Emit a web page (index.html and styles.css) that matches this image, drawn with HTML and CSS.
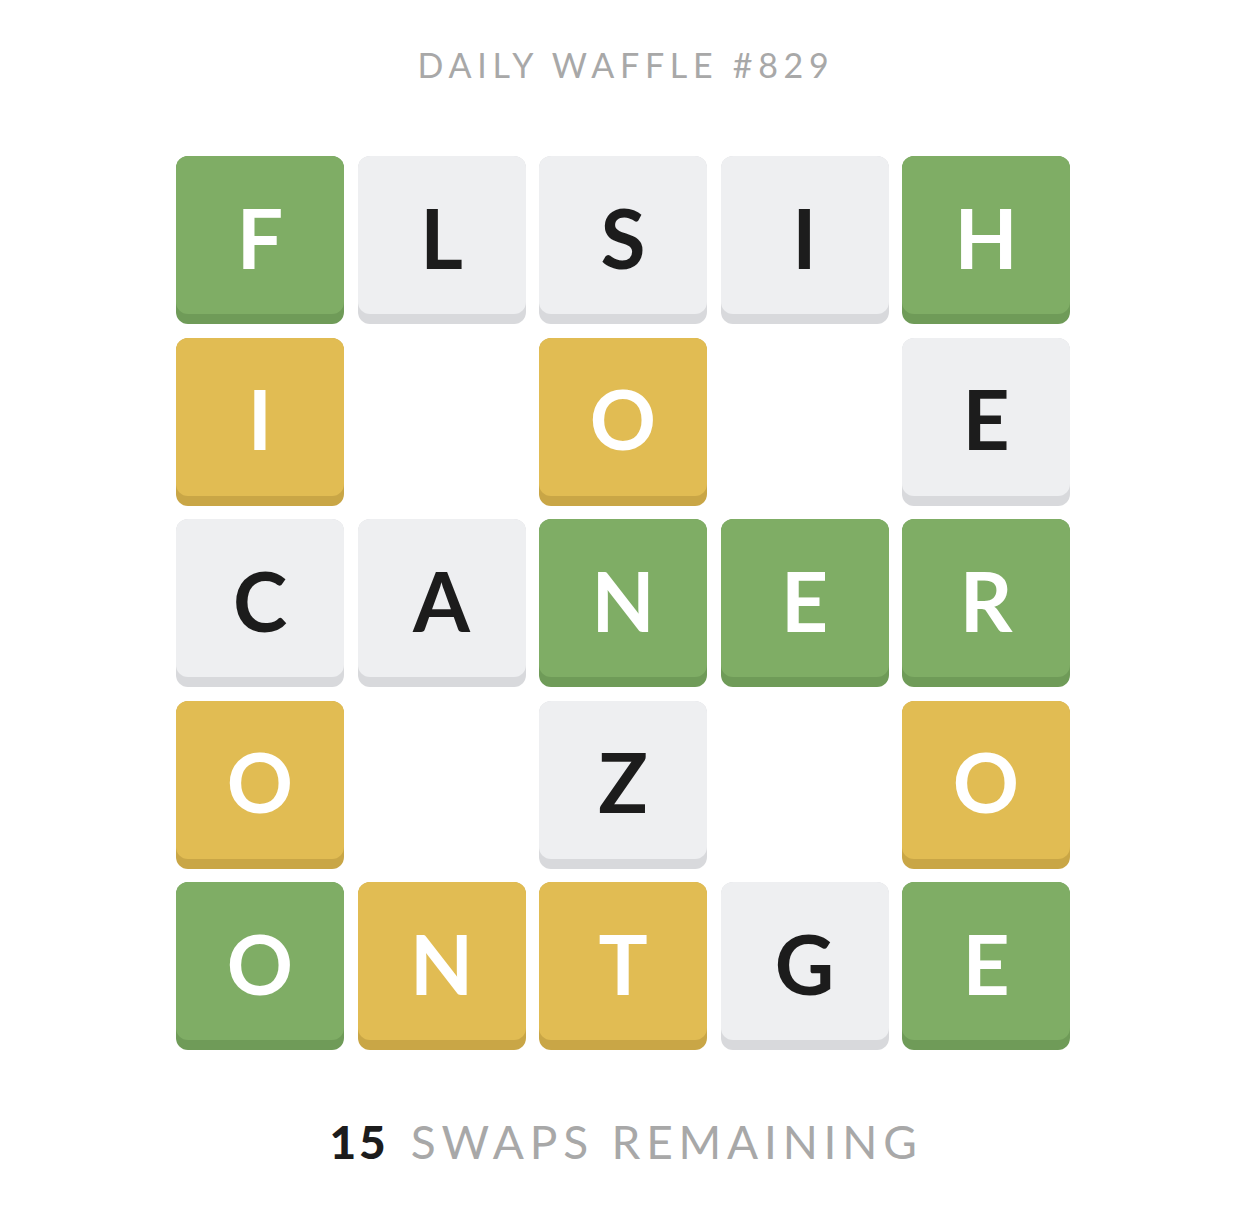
FILE: index.html
```html
<!DOCTYPE html>
<html>
<head>
<meta charset="utf-8">
<link rel="stylesheet" href="styles.css">
</head>
<body>
<main class="page">
  <h1 class="title">DAILY WAFFLE #829</h1>
  <div class="board">
    <div class="tile green"><div class="face">F</div></div>
    <div class="tile gray"><div class="face">L</div></div>
    <div class="tile gray"><div class="face">S</div></div>
    <div class="tile gray"><div class="face">I</div></div>
    <div class="tile green"><div class="face">H</div></div>

    <div class="tile yellow"><div class="face">I</div></div>
    <div class="hole"></div>
    <div class="tile yellow"><div class="face">O</div></div>
    <div class="hole"></div>
    <div class="tile gray"><div class="face">E</div></div>

    <div class="tile gray"><div class="face">C</div></div>
    <div class="tile gray"><div class="face">A</div></div>
    <div class="tile green"><div class="face">N</div></div>
    <div class="tile green"><div class="face">E</div></div>
    <div class="tile green"><div class="face">R</div></div>

    <div class="tile yellow"><div class="face">O</div></div>
    <div class="hole"></div>
    <div class="tile gray"><div class="face">Z</div></div>
    <div class="hole"></div>
    <div class="tile yellow"><div class="face">O</div></div>

    <div class="tile green"><div class="face">O</div></div>
    <div class="tile yellow"><div class="face">N</div></div>
    <div class="tile yellow"><div class="face">T</div></div>
    <div class="tile gray"><div class="face">G</div></div>
    <div class="tile green"><div class="face">E</div></div>
  </div>
  <p class="swaps"><span class="count">15</span><span class="label">SWAPS REMAINING</span></p>
</main>
</body>
</html>
```
FILE: styles.css
```css
html, body {
  margin: 0;
  padding: 0;
  background: #ffffff;
}
.page {
  width: 1246px;
  display: flex;
  flex-direction: column;
  align-items: center;
  font-family: "Lato", "Open Sans", sans-serif;
}
.title {
  margin: 44px 0 0 0;
  font-size: 34px;
  line-height: 42px;
  font-weight: 400;
  letter-spacing: 5.7px;
  color: #a8a8a8;
  padding-left: 6px;
}
.board {
  margin-top: 70px;
  display: grid;
  grid-template-columns: repeat(5, 168px);
  grid-auto-rows: 168px;
  column-gap: 13.5px;
  row-gap: 13.5px;
}
.tile {
  display: flex;
  flex-direction: column;
  padding-bottom: 10px;
  border-radius: 12px;
  box-sizing: border-box;
}
.face {
  flex: 1;
  display: flex;
  align-items: center;
  justify-content: center;
  border-radius: 12px;
  font-size: 82px;
  font-weight: 700;
  line-height: 1;
  padding-top: 3px;
}
.green { background: #6f9b58; }
.green .face { background: #7fad65; color: #ffffff; }
.yellow { background: #c9a646; }
.yellow .face { background: #e1bc53; color: #ffffff; }
.gray { background: #d8d9dc; }
.gray .face { background: #eeeff1; color: #1c1c1c; }
.swaps {
  margin: 64px 0 0 0;
  font-size: 46px;
  line-height: 56px;
  padding-left: 6px;
}
.count {
  font-weight: 900;
  color: #1c1c1c;
  letter-spacing: 3px;
  margin-right: 22px;
}
.label {
  font-weight: 400;
  color: #a8a8a8;
  letter-spacing: 5.8px;
}
```
